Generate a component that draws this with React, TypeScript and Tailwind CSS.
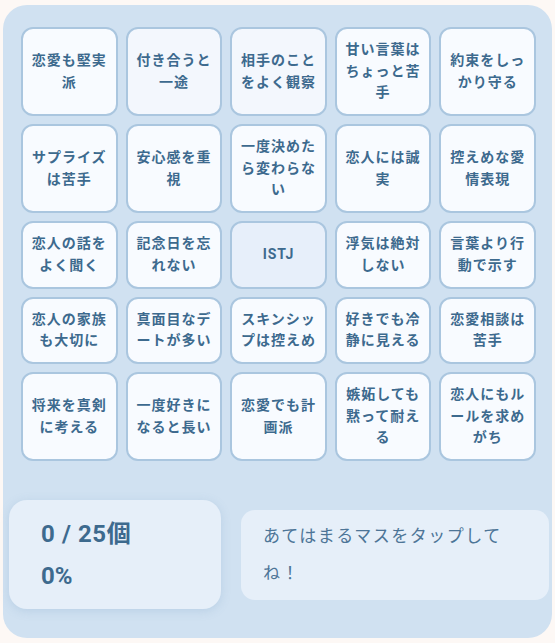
const cells: string[] = [
  '恋愛も堅実派',
  '付き合うと一途',
  '相手のことをよく観察',
  '甘い言葉はちょっと苦手',
  '約束をしっかり守る',
  'サプライズは苦手',
  '安心感を重視',
  '一度決めたら変わらない',
  '恋人には誠実',
  '控えめな愛情表現',
  '恋人の話をよく聞く',
  '記念日を忘れない',
  'ISTJ',
  '浮気は絶対しない',
  '言葉より行動で示す',
  '恋人の家族も大切に',
  '真面目なデートが多い',
  'スキンシップは控えめ',
  '好きでも冷静に見える',
  '恋愛相談は苦手',
  '将来を真剣に考える',
  '一度好きになると長い',
  '恋愛でも計画派',
  '嫉妬しても黙って耐える',
  '恋人にもルールを求めがち',
];

function Cell({ label, index }: { label: string; index: number }) {
  const center = index === 12;
  const soft = index === 1 || index === 2;
  return (
    <button
      className={`flex items-center justify-center rounded-[12px] border-2 border-[#aac6df] px-[6px] py-[10.25px] text-center text-[14px] font-bold leading-[21.5px] tracking-[1px] text-[#3d6a8e] ${
        center ? 'bg-[#e7effa]' : soft ? 'bg-[#f3f7fd]' : 'bg-[#f8fbff]'
      }`}
    >
      {label}
    </button>
  );
}

export default function App() {
  return (
    <div
      className="min-h-[643px] bg-[#fdf8f5] pt-[5px] pl-[3px]"
      style={{ fontFamily: 'Roboto, "Noto Sans CJK JP", sans-serif' }}
    >
      <div className="w-[549px] rounded-[24px] bg-[#d0e1f1] pt-[22px] pb-[29px]">
        {/* Bingo grid */}
        <div className="ml-[18px] grid w-[515px] grid-cols-5 gap-[8px]">
          {cells.map((c, i) => (
            <Cell key={i} label={c} index={i} />
          ))}
        </div>

        {/* Footer */}
        <div className="mt-[39px] ml-[6px] flex items-center gap-[20px]">
          <div className="flex h-[109px] w-[212px] flex-col justify-center rounded-[18px] bg-[#e6eff9] pl-[32px] text-[#3d6a8e] shadow-[0_2px_10px_rgba(120,160,200,0.25)]">
            <div className="text-[24px] font-bold leading-[42px] tracking-[0.6px]">0 / 25個</div>
            <div className="text-[24px] font-bold leading-[42px]">0%</div>
          </div>
          <div className="flex h-[90px] w-[308px] items-center rounded-[14px] bg-[#e6eff9] pl-[22px] pr-[30px]">
            <p className="text-[17px] leading-[37px] tracking-[1.5px] text-[#4d7597]">
              あてはまるマスをタップしてね！
            </p>
          </div>
        </div>
      </div>
    </div>
  );
}
